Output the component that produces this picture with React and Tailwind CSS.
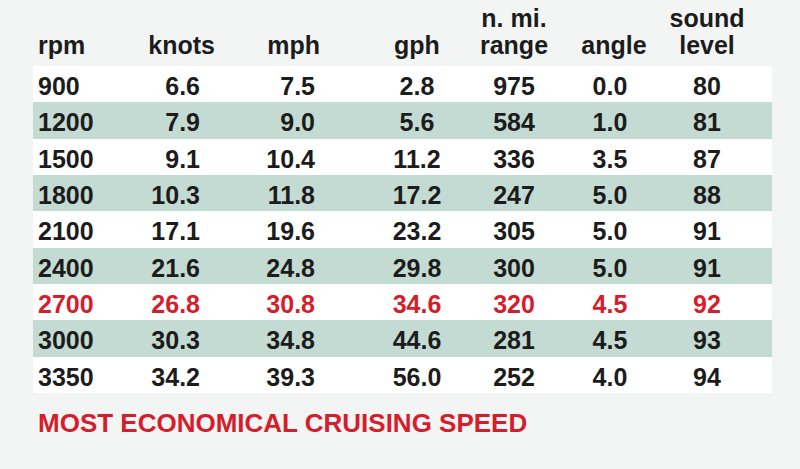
import React from "react";

const rows = [
  ["900", "6.6", "7.5", "2.8", "975", "0.0", "80"],
  ["1200", "7.9", "9.0", "5.6", "584", "1.0", "81"],
  ["1500", "9.1", "10.4", "11.2", "336", "3.5", "87"],
  ["1800", "10.3", "11.8", "17.2", "247", "5.0", "88"],
  ["2100", "17.1", "19.6", "23.2", "305", "5.0", "91"],
  ["2400", "21.6", "24.8", "29.8", "300", "5.0", "91"],
  ["2700", "26.8", "30.8", "34.6", "320", "4.5", "92"],
  ["3000", "30.3", "34.8", "44.6", "281", "4.5", "93"],
  ["3350", "34.2", "39.3", "56.0", "252", "4.0", "94"],
];

const heights = ["h-[36px]", "h-[37px]", "h-[36px]", "h-[36px]", "h-[37px]", "h-[36px]", "h-[36px]", "h-[37px]", "h-[36px]"];

const valueCls = [
  "text-left pl-[5px]",
  "text-right pr-[32px]",
  "text-right pr-[45px]",
  "text-center",
  "text-center",
  "text-center",
  "text-center",
];

const grid = "grid grid-cols-[97px_102px_128px_114px_80px_112px_82px_24px]";

export default function App() {
  return (
    <div
      className="w-[800px] h-[469px] bg-[#f3f5f5] overflow-hidden text-[#1c1c1c] font-bold"
      style={{ fontFamily: '"Liberation Sans", Arial, sans-serif' }}
    >
      <div className="pl-[33px]">
        <div className={`${grid} w-[739px] h-[66px] items-end pb-[7px] text-[25px] leading-[27px]`}>
          <div className="text-left pl-[5px]">rpm</div>
          <div className="text-right pr-[17px]">knots</div>
          <div className="text-right pr-[40px]">mph</div>
          <div className="text-center">gph</div>
          <div className="text-center flex flex-col items-center">
            <span>n. mi.</span>
            <span>range</span>
          </div>
          <div className="text-center pl-[8px]">angle</div>
          <div className="text-center flex flex-col items-center">
            <span>sound</span>
            <span>level</span>
          </div>
          <div />
        </div>
        {rows.map((r, i) => {
          const red = r[0] === "2700";
          return (
            <div
              key={i}
              className={`${grid} w-[739px] ${heights[i]} ${i % 2 === 1 ? "bg-[#c4dbd3]" : "bg-white"} ${
                red ? "text-[#d61d2b]" : ""
              } text-[25px] leading-[32px] pt-[4px]`}
            >
              {r.map((v, j) => (
                <div key={j} className={`whitespace-nowrap ${valueCls[j]}`}>
                  {v}
                </div>
              ))}
              <div />
            </div>
          );
        })}
        <div className="mt-[17px] pl-[5px] text-[26px] leading-[26px] text-[#d61d2b] whitespace-nowrap">
          MOST ECONOMICAL CRUISING SPEED
        </div>
      </div>
    </div>
  );
}
